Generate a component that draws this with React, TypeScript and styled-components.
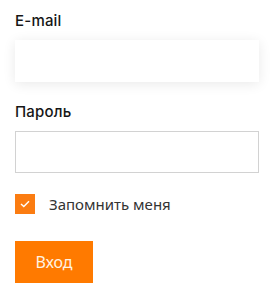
import React from "react";
import styled, { createGlobalStyle } from "styled-components";

const Global = createGlobalStyle`
  html, body { margin: 0; padding: 0; background: #fff; }
  body { font-family: "Noto Sans", "Open Sans", sans-serif; color: #111; }
`;

const Form = styled.form`
  width: 244px;
  padding: 12px 15px 0 15px;
  display: flex;
  flex-direction: column;
`;

const Label = styled.label`
  font-family: Inter, "Noto Sans", sans-serif;
  font-size: 15px;
  font-weight: 500;
  letter-spacing: 0.2px;
  line-height: 18px;
  color: #161616;
  margin-bottom: 10px;
`;

const Input = styled.input<{ $shadow?: boolean }>`
  box-sizing: border-box;
  width: 244px;
  height: 42px;
  border: ${(p) => (p.$shadow ? "none" : "1px solid #d2d2d2")};
  box-shadow: ${(p) => (p.$shadow ? "0 2px 12px rgba(0,0,0,0.09)" : "none")};
  background: #fff;
  outline: none;
  margin-bottom: 21px;
`;

const CheckRow = styled.label`
  display: flex;
  align-items: center;
  gap: 14px;
  font-size: 15px;
  line-height: 18px;
  color: #333;
  margin-top: 0;
  margin-bottom: 27px;
`;

const Box = styled.span`
  width: 20px;
  height: 20px;
  background: #fb7c11;
  display: flex;
  align-items: center;
  justify-content: center;
`;

const Button = styled.button`
  width: 78px;
  height: 42px;
  background: #ff7a00;
  border: none;
  color: #fff3e3;
  font-family: inherit;
  font-size: 16px;
  padding: 0;
`;

export default function App() {
  return (
    <>
      <Global />
      <Form>
        <Label>E-mail</Label>
        <Input $shadow />
        <Label>Пароль</Label>
        <Input type="password" />
        <CheckRow>
          <Box>
            <svg width="10" height="8" viewBox="0 0 10 8">
              <path d="M1 4l2.8 2.6L9 1.2" fill="none" stroke="#fff" strokeWidth="1.4" />
            </svg>
          </Box>
          Запомнить меня
        </CheckRow>
        <Button type="button">Вход</Button>
      </Form>
    </>
  );
}
